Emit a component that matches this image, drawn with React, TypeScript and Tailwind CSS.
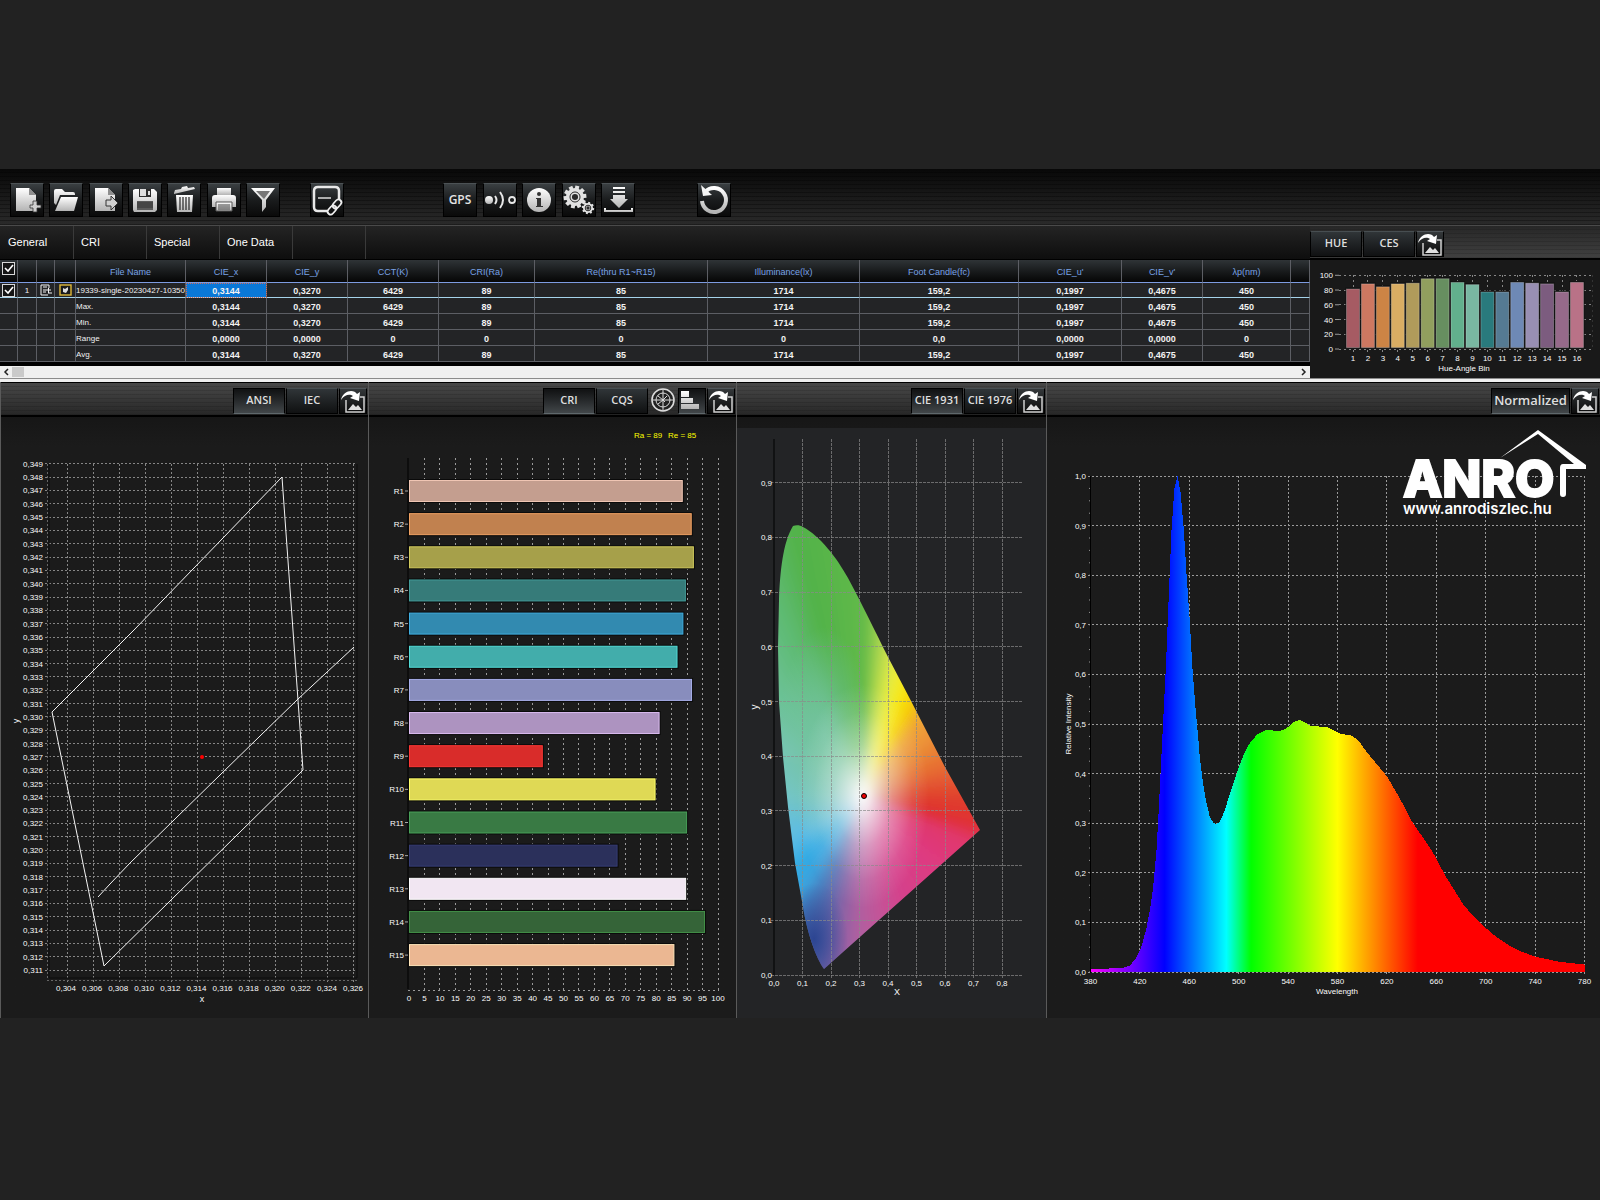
import type { ReactNode } from 'react'

const comma = (value: number, digits: number) => value.toFixed(digits).replace('.', ',')
const range = (count: number) => Array.from({ length: count }, (_, i) => i)

const columns = [
  { label: 'File Name', width: 110 },
  { label: 'CIE_x', width: 81 },
  { label: 'CIE_y', width: 81 },
  { label: 'CCT(K)', width: 91 },
  { label: 'CRI(Ra)', width: 96 },
  { label: 'Re(thru R1~R15)', width: 173 },
  { label: 'Illuminance(lx)', width: 152 },
  { label: 'Foot Candle(fc)', width: 159 },
  { label: "CIE_u'", width: 103 },
  { label: "CIE_v'", width: 81 },
  { label: 'λp(nm)', width: 88 },
]

const measured = ['0,3144', '0,3270', '6429', '89', '85', '1714', '159,2', '0,1997', '0,4675', '450']

const summaryRows = [
  { name: 'Max.', values: measured },
  { name: 'Min.', values: measured },
  { name: 'Range', values: ['0,0000', '0,0000', '0', '0', '0', '0', '0,0', '0,0000', '0,0000', '0'] },
  { name: 'Avg.', values: measured },
]

const hueBins = [
  { value: 82, color: '#a65b63' },
  { value: 89, color: '#cd7861' },
  { value: 85, color: '#cc8445' },
  { value: 89, color: '#d9ad63' },
  { value: 90, color: '#b09b5b' },
  { value: 96, color: '#919f5e' },
  { value: 96, color: '#678f60' },
  { value: 91, color: '#62b08d' },
  { value: 88, color: '#79b7a2' },
  { value: 78, color: '#297a7d' },
  { value: 78, color: '#557a93' },
  { value: 91, color: '#6e89b5' },
  { value: 90, color: '#988fb3' },
  { value: 89, color: '#7c5c7f' },
  { value: 78, color: '#966a8a' },
  { value: 91, color: '#b97287' },
]

const criBars = [
  { value: 88.6, color: '#c49e8f', edge: '#f0c6b4' },
  { value: 91.5, color: '#c1814f', edge: '#f0a263' },
  { value: 92.2, color: '#a6a04a', edge: '#d0c95d' },
  { value: 89.6, color: '#367b79', edge: '#449c99' },
  { value: 88.8, color: '#328ab0', edge: '#40aee0' },
  { value: 86.9, color: '#42adab', edge: '#53dbd7' },
  { value: 91.6, color: '#888dbd', edge: '#a9b0ec' },
  { value: 81.1, color: '#ad93c0', edge: '#ddbdf3' },
  { value: 43.3, color: '#d92c2a', edge: '#ff3735' },
  { value: 79.8, color: '#dfd955', edge: '#ffff6a' },
  { value: 90, color: '#397a44', edge: '#48a058' },
  { value: 67.5, color: '#2b305b', edge: '#363d75' },
  { value: 89.7, color: '#f1e6f2', edge: '#ffffff' },
  { value: 95.8, color: '#356438', edge: '#439048' },
  { value: 85.9, color: '#ebb792', edge: '#ffe6bb' },
]

// wavelength in nm, relative intensity
const spectrum: [number, number][] = [
  [380, 0.007], [395, 0.007], [407, 0.009], [412, 0.013], [416.4, 0.027], [420.7, 0.047], [425, 0.085],
  [428.4, 0.13], [430.7, 0.17], [433.6, 0.25], [435.6, 0.345], [437.9, 0.46], [439.3, 0.527], [441.3, 0.628],
  [443.6, 0.77], [445.6, 0.89], [447.9, 0.975], [450.5, 1], [453, 0.965], [455.6, 0.89], [457.9, 0.797],
  [460.2, 0.716], [462.5, 0.615], [464.8, 0.54], [467, 0.48], [468.5, 0.433], [470.8, 0.387], [473.7, 0.343],
  [476.6, 0.313], [479.4, 0.301], [482.3, 0.298], [485.2, 0.305], [488.9, 0.327], [492.9, 0.36], [496.6, 0.388],
  [500, 0.412], [503.8, 0.437], [509.5, 0.464], [515.2, 0.479], [523, 0.489], [529.6, 0.486], [535.9, 0.487],
  [541, 0.496], [545.3, 0.505], [549.6, 0.508], [553.9, 0.503], [558.2, 0.496], [571.1, 0.494], [576.9, 0.487],
  [582.6, 0.48], [591.2, 0.477], [596.9, 0.467], [604.1, 0.442], [619.8, 0.395], [629.9, 0.353], [639.9, 0.305],
  [657.1, 0.242], [667.1, 0.195], [681.4, 0.138], [690, 0.112], [700, 0.089], [709, 0.07], [718.7, 0.054],
  [729, 0.041], [740.2, 0.031], [758.8, 0.021], [780, 0.015],
]

// hue around the white point, degrees clockwise from the top
const gamutStops: [number, number, number, number][] = [
  [0, 98, 185, 72], [3, 128, 198, 76], [7, 176, 216, 78], [13, 229, 236, 68], [20, 248, 232, 24], [28, 246, 204, 0],
  [36, 240, 166, 56], [52, 235, 140, 55], [70, 231, 108, 50], [92, 224, 62, 46], [104, 224, 48, 48],
  [113, 224, 56, 108], [133, 223, 58, 128], [160, 212, 66, 140], [172, 196, 84, 152], [182, 176, 96, 160],
  [189, 144, 98, 164], [195, 112, 104, 170], [200, 88, 112, 178], [205, 74, 128, 192], [213, 60, 164, 222],
  [222, 48, 170, 228], [238, 93, 189, 229], [270, 116, 198, 200], [303, 118, 197, 176], [326, 104, 192, 140],
  [337, 93, 186, 112], [346, 82, 178, 72], [360, 98, 185, 72],
]

function gamutColor(angle: number) {
  const next = Math.max(1, gamutStops.findIndex((stop) => stop[0] >= angle))
  const a = gamutStops[next - 1]
  const b = gamutStops[next]
  const t = (angle - a[0]) / (b[0] - a[0])
  const mix = (i: number) => Math.round(a[i] + (b[i] - a[i]) * t)
  return `rgb(${mix(1)},${mix(2)},${mix(3)})`
}

function Defs() {
  return (
    <svg className="h-0 w-0 absolute" aria-hidden>
      <defs>
        <linearGradient id="metal" x1="0" y1="0" x2="0" y2="1">
          <stop offset="0" stopColor="#ffffff" />
          <stop offset="1" stopColor="#b4b4b4" />
        </linearGradient>
      </defs>
    </svg>
  )
}

function ToolButton({ label, children }: { label: string; children: ReactNode }) {
  return (
    <button
      type="button"
      aria-label={label}
      className="h-[34px] w-[34px] shrink-0 border border-black border-t-[#4c5255] bg-linear-to-b from-[#3a3f42] via-[#1a1c1d] to-[#0a0a0a] font-['Open_Sans',sans-serif] text-xs font-semibold text-[#e4e4e4]"
    >
      {children}
    </button>
  )
}

function ToolIcon({ children }: { children: ReactNode }) {
  return (
    <svg className="-m-px h-[34px] w-[34px]" viewBox="0 0 34 34" fill="url(#metal)">
      {children}
    </svg>
  )
}

function Gear({ cx, cy, r, teeth, tooth }: { cx: number; cy: number; r: number; teeth: number; tooth: number }) {
  return (
    <g transform={`translate(${cx} ${cy})`} fill="#e2e2e2">
      {range(teeth).map((i) => (
        <rect
          key={i}
          x={-tooth / 2}
          y={-r - tooth * 0.6}
          width={tooth}
          height={tooth * 1.2}
          transform={`rotate(${(360 / teeth) * i + 12})`}
        />
      ))}
      <circle r={r} />
      <circle r={r * 0.56} fill="none" stroke="#2a2a2a" strokeWidth="1" />
      <circle r={r * 0.34} fill="#2a2a2a" />
    </g>
  )
}

function Toolbar() {
  return (
    <div className="flex h-[57px] items-center border-b border-[#4a4a4a] bg-[repeating-linear-gradient(to_bottom,transparent_0_3px,#00000050_3px_4px),linear-gradient(to_bottom,#080808,#2a2a2a)] px-[10px] pt-[6px]">
      <div className="flex w-[270px] justify-between">
        <ToolButton label="New file">
          <ToolIcon>
            <path d="M6 5h13l7 7v10h-3v6H6z" />
            <path d="M19 5v7h7z" fill="#8f8f8f" />
            <path d="M23 18h4v4h4v3h-4v4h-4v-4h-3v-3h3z" fill="#d0d0d0" stroke="#333" strokeWidth="0.8" />
          </ToolIcon>
        </ToolButton>
        <ToolButton label="Open">
          <ToolIcon>
            <path d="M5 8q0-2 2-2h6l3 3h8q2 0 2 2v1H11L7 22 5 20z" />
            <path d="M12 14h17l-4 14H6z" />
          </ToolIcon>
        </ToolButton>
        <ToolButton label="Export">
          <ToolIcon>
            <path d="M6 5h13l7 7v16H6z" />
            <path d="M19 5v7h7z" fill="#8f8f8f" />
            <path d="M17 17h5v-4l7 7-7 7v-4h-5z" fill="#d0d0d0" stroke="#333" />
          </ToolIcon>
        </ToolButton>
        <ToolButton label="Save">
          <ToolIcon>
            <path d="M5 7l2-1h19l3 3v18l-2 2H6l-1-2z" />
            <path d="M11 6h12v8H11z" fill="#2b2b2b" />
            <path d="M12 6h6v7h-6zM20 8h2v4h-2z" fill="#dcdcdc" />
            <path d="M9 18h16v9H9z" fill="#5a5a5a" />
            <path d="M9 20h16M9 22h16M9 24h16" stroke="#333" />
          </ToolIcon>
        </ToolButton>
        <ToolButton label="Delete">
          <ToolIcon>
            <path d="M7 10l1-3 6-1 1-2 5-1 1 2 6-1 1 2-21 5z" />
            <path d="M9 12h17l-1 17H10z" />
            <path d="M13 14v13M16 14v13M19 14v13M22 14v13" stroke="#333" strokeWidth="1.3" />
          </ToolIcon>
        </ToolButton>
        <ToolButton label="Print">
          <ToolIcon>
            <path d="M10 5h14v7H10z" />
            <path d="M5 15q0-3 3-3h18q3 0 3 3v9h-4v-4H9v4H5z" />
            <path d="M9 19h16v9H9z" stroke="#555" />
            <path d="M11 22h12M11 24h12M11 26h12" stroke="#444" />
          </ToolIcon>
        </ToolButton>
        <ToolButton label="Filter">
          <ToolIcon>
            <path d="M5 5h24l-9 12v7l-4 5V17z" />
            <path d="M10 8h14l-6 8z" fill="#777" />
          </ToolIcon>
        </ToolButton>
      </div>
      <div className="ml-[30px] flex">
        <ToolButton label="Link screen">
          <ToolIcon>
            <path
              d="M17 28H8q-4 0-4-4V8q0-4 4-4h17q4 0 4 4v9"
              fill="none"
              stroke="#e8e8e8"
              strokeWidth="2.5"
            />
            <path d="M8 15h13" stroke="#ddd" strokeWidth="1.5" />
            <g fill="none" stroke="#eee" strokeWidth="1.8">
              <rect x="-5" y="-3" width="10" height="6" rx="3" transform="translate(27 21) rotate(-48)" />
              <rect x="-5" y="-3" width="10" height="6" rx="3" transform="translate(22 27) rotate(-48)" />
            </g>
          </ToolIcon>
        </ToolButton>
      </div>
      <div className="ml-[99px] flex w-[192px] justify-between">
        <ToolButton label="GPS">GPS</ToolButton>
        <ToolButton label="Beacon">
          <ToolIcon>
            <circle cx="6" cy="17" r="4" />
            <path d="M12 13q3 4 0 8M17 9q6 8 0 16" fill="none" stroke="#e8e8e8" strokeWidth="2" />
            <circle cx="29" cy="17" r="3" fill="none" stroke="#e8e8e8" strokeWidth="1.8" />
          </ToolIcon>
        </ToolButton>
        <ToolButton label="Info">
          <ToolIcon>
            <circle cx="17" cy="17" r="12" />
            <circle cx="17" cy="11" r="2" fill="#333" />
            <path d="M14 15h5v8h2v1h-7v-1h1v-7h-1z" fill="#333" />
          </ToolIcon>
        </ToolButton>
        <ToolButton label="Settings">
          <ToolIcon>
            <Gear cx={13} cy={14} r={9} teeth={10} tooth={4} />
            <Gear cx={26} cy={25} r={5} teeth={8} tooth={2} />
          </ToolIcon>
        </ToolButton>
        <ToolButton label="Download">
          <ToolIcon>
            <path d="M12 4h12v2H12zM12 8h12v2H12zM12 12h12v4h3l-9 9-9-9h3z" />
            <path d="M3 25h2v2h25v-2h2v4H3z" />
          </ToolIcon>
        </ToolButton>
      </div>
      <div className="ml-[62px] flex">
        <ToolButton label="Refresh">
          <ToolIcon>
            <path d="M8 9A12 12 0 1 1 5 18" fill="none" stroke="url(#metal)" strokeWidth="4" />
            <path d="M4 2l2 11 9-1z" fill="#f4f4f4" />
          </ToolIcon>
        </ToolButton>
      </div>
    </div>
  )
}

function PanelButton({ children, active, wide }: { children: ReactNode; active?: boolean; wide?: boolean }) {
  return (
    <button
      type="button"
      aria-pressed={!!active}
      className={`h-[26px] shrink-0 border border-black font-['Open_Sans',sans-serif] font-semibold whitespace-nowrap text-[#dedede] ${
        wide ? 'w-[79px] text-[13px]' : 'w-[52px] text-[11px]'
      } ${
        active
          ? 'border-b-[#5f686c] bg-linear-to-b from-[#101112] to-[#42474a]'
          : 'border-t-[#474e51] bg-linear-to-b from-[#303538] to-[#101112]'
      }`}
    >
      {children}
    </button>
  )
}

function ExportButton() {
  return (
    <button
      type="button"
      aria-label="Export image"
      className="h-[26px] w-7 shrink-0 border border-black border-t-[#50565a] bg-linear-to-b from-[#34383a] to-[#0c0c0c]"
    >
      <svg className="-m-px h-[26px] w-7" viewBox="0 0 28 26" fill="none">
        <path d="M7 12v12h18V9h-4" stroke="#cfcfcf" strokeWidth="1.5" />
        <path d="M9 22l5-6 3 3 2-2 4 5z" fill="#e0e0e0" />
        <path d="M2 12C4 2 15 1 18 6l3-2-1 9-9-3 3-2C11 6 6 6 2 12z" fill="#fff" />
      </svg>
    </button>
  )
}

function PanelHeader({ children }: { children: ReactNode }) {
  return (
    <div className="flex h-[35px] items-center justify-end gap-px border-t border-b-2 border-black bg-[repeating-linear-gradient(to_bottom,transparent_0_3px,#00000020_3px_4px),linear-gradient(to_bottom,#484848,#272727)] pt-[3px] pr-px">
      {children}
    </div>
  )
}

function Tick({ label }: { label: string }) {
  return (
    <label className="mx-auto grid h-[13px] w-[13px]">
      <input
        type="checkbox"
        defaultChecked
        aria-label={label}
        className="peer col-start-1 row-start-1 h-[13px] w-[13px] appearance-none border border-[#d8d8d8] bg-[#151515]"
      />
      <svg
        viewBox="0 0 13 13"
        className="pointer-events-none invisible col-start-1 row-start-1 h-[13px] w-[13px] peer-checked:visible"
      >
        <path d="M3 6l3 3 5-6" fill="none" stroke="#fff" strokeWidth="1.6" />
      </svg>
    </label>
  )
}

const cell = 'border-r border-b border-r-[#5c5e64] overflow-hidden whitespace-nowrap'

function DataTable() {
  return (
    <table className="w-full table-fixed border-separate border-spacing-0 bg-[#232426] text-[9px] leading-[12px] text-[#f2f2f2]">
      <colgroup>
        <col className="w-[18px]" />
        <col className="w-[19px]" />
        <col className="w-[18px]" />
        <col className="w-[21px]" />
        {columns.map((column) => (
          <col key={column.label} style={{ width: column.width }} />
        ))}
        <col />
      </colgroup>
      <thead>
        <tr className="h-[23px] bg-linear-to-b from-[#2f3437] to-[#050505] text-[#78a2e6]">
          <th className={`${cell} border-b-[#7d9be0] p-0 pt-[2px] align-top`}>
            <Tick label="Select all" />
          </th>
          <th className={`${cell} border-b-[#7d9be0] p-0`} />
          <th className={`${cell} border-b-[#7d9be0] p-0`} />
          <th className={`${cell} border-b-[#7d9be0] p-0`} />
          {columns.map((column) => (
            <th key={column.label} className={`${cell} border-b-[#7d9be0] p-0 pt-[2px] font-normal`}>
              {column.label}
            </th>
          ))}
          <th className={`${cell} border-b-[#7d9be0] p-0`} />
        </tr>
      </thead>
      <tbody className="text-center">
        <tr className="h-[15px]">
          <td className={`${cell} border-b-[#a5d3ea] p-0`}>
            <Tick label="Select row 1" />
          </td>
          <td className={`${cell} border-b-[#a5d3ea] p-0 pt-px text-[8px]`}>1</td>
          <td className={`${cell} border-b-[#a5d3ea] p-0`}>
            <svg viewBox="0 0 12 12" className="mx-auto h-3 w-3" fill="none" stroke="#f2f2f2">
              <path d="M9 4V1H1v10h7M3 3h4M3 6h3M3 8h3M6 6h5M8.500 4v5M8 9h4" />
            </svg>
          </td>
          <td className={`${cell} border-b-[#a5d3ea] p-0`}>
            <svg viewBox="0 0 13 12" className="mx-auto h-3 w-[13px]">
              <rect x="1" y="1" width="11" height="10" fill="#1a1a1a" stroke="#e0b93a" strokeWidth="1.4" />
              <path d="M4 4l2 1 3-2v3L7 9 4 8z" fill="#ddd" />
            </svg>
          </td>
          <td className={`${cell} border-b-[#a5d3ea] p-0 pt-[2px] text-left text-[8px]`}>
            19339-single-20230427-10350
          </td>
          {measured.map((value, i) => (
            <td
              key={i}
              className={`${cell} border-b-[#a5d3ea] p-0 pt-[2px] font-bold ${
                i === 0 ? 'bg-[#0a78d8] outline outline-dotted -outline-offset-1 outline-[#d06a5a]' : ''
              }`}
            >
              {value}
            </td>
          ))}
          <td className={`${cell} border-b-[#a5d3ea] p-0`} />
        </tr>
        {summaryRows.map((row) => (
          <tr key={row.name} className="h-4">
            {range(4).map((i) => (
              <td key={i} className={`${cell} border-b-[#5c5e64] p-0`} />
            ))}
            <td className={`${cell} border-b-[#5c5e64] p-0 pt-[3px] text-left text-[8px]`}>{row.name}</td>
            {row.values.map((value, i) => (
              <td key={i} className={`${cell} border-b-[#5c5e64] p-0 pt-[3px] font-bold`}>
                {value}
              </td>
            ))}
            <td className={`${cell} border-b-[#5c5e64] p-0`} />
          </tr>
        ))}
      </tbody>
    </table>
  )
}

function ScrollBar() {
  return (
    <div className="flex h-3 items-center bg-[#efefef]">
      <button type="button" aria-label="Scroll left" className="flex h-3 w-3 items-center justify-center">
        <svg viewBox="0 0 6 8" className="h-2 w-[6px]" fill="none" stroke="#222" strokeWidth="1.5">
          <path d="M5 1L2 4l3 3" />
        </svg>
      </button>
      <div className="h-[10px] w-3 bg-[#c9c9c9]" />
      <button type="button" aria-label="Scroll right" className="ml-auto flex h-3 w-3 items-center justify-center">
        <svg viewBox="0 0 6 8" className="h-2 w-[6px]" fill="none" stroke="#222" strokeWidth="1.5">
          <path d="M1 1l3 3-3 3" />
        </svg>
      </button>
    </div>
  )
}

function HueChart() {
  const y = (value: number) => 89 - value * 0.737
  const x = (bin: number) => 43 + bin * 14.93
  return (
    <svg viewBox="0 0 290 118" className="block w-full bg-[#191919] text-[8px]" fill="#fafafa">
      <g stroke="#858585" strokeDasharray="2 3" shapeRendering="crispEdges">
        {range(6).map((i) => (
          <line key={i} x1="29" x2="283" y1={y(i * 20)} y2={y(i * 20)} />
        ))}
        {range(16).map((i) => (
          <line key={i} x1={x(i)} x2={x(i)} y1="15" y2="92" />
        ))}
        <line x1="282" x2="282" y1="15" y2="89" stroke="#333" />
      </g>
      {range(6).map((i) => (
        <g key={i}>
          <line x1="25" x2="29" y1={y(i * 20)} y2={y(i * 20)} stroke="#999" />
          <text x="23" y={y(i * 20) + 3} textAnchor="end">
            {i * 20}
          </text>
        </g>
      ))}
      {hueBins.map((bin, i) => (
        <g key={i}>
          <rect x={x(i) - 7.5} y={y(bin.value) - 1} width="15" height={88 - y(bin.value) + 1} fill="#101010" />
          <rect
            x={x(i) - 6.5}
            y={y(bin.value) + 0.5}
            width="13"
            height={87 - y(bin.value)}
            fill={bin.color}
            stroke="#fff"
            strokeOpacity="0.25"
          />
          <text x={x(i)} y="101" textAnchor="middle">
            {i + 1}
          </text>
        </g>
      ))}
      <text x="154" y="111" textAnchor="middle">
        Hue-Angle Bin
      </text>
    </svg>
  )
}

function BinningChart() {
  const x = (value: number) => 67 + (value - 0.304) * 13045
  const y = (value: number) => 553 - (value - 0.311) * 13320
  return (
    <svg viewBox="1 0 367 601" className="block w-full text-[8px]" fill="#fafafa">
      <g stroke="#868686" strokeDasharray="2 2" shapeRendering="crispEdges">
        {range(39).map((i) => (
          <line key={i} x1="45" x2="357" y1={y(0.311 + i / 1000)} y2={y(0.311 + i / 1000)} />
        ))}
        {range(12).map((i) => (
          <line key={i} x1={x(0.304 + i / 500)} x2={x(0.304 + i / 500)} y1="47" y2="565" />
        ))}
        <line x1="47" x2="47" y1="47" y2="562" stroke="#666" />
        <line x1="47" x2="357" y1="563" y2="563" stroke="#666" />
      </g>
      <path d="M49 47v514h308M357 47v514" fill="none" stroke="#0c0c0c" strokeWidth="1" />
      {range(39).map((i) => (
        <text key={i} x="43" y={y(0.311 + i / 1000) + 3} textAnchor="end">
          {comma(0.311 + i / 1000, 3)}
        </text>
      ))}
      {range(12).map((i) => (
        <text key={i} x={x(0.304 + i / 500) - 1} y="574" textAnchor="middle">
          {comma(0.304 + i / 500, 3)}
        </text>
      ))}
      <text x="202" y="585" textAnchor="middle" className="text-[9px]">
        x
      </text>
      <text x="0" y="0" textAnchor="middle" transform="translate(19 304) rotate(-90)" className="text-[9px]">
        y
      </text>
      <g fill="none" stroke="#f4f4f4" strokeWidth="1">
        <path d="M282 60L303 353L104 549L52 295L74 273L134 213Z" />
        <path d="M98 480L110 467L130 446L220 358L298 282L354 230" />
      </g>
      <circle cx="202" cy="340" r="2" fill="#f00" />
    </svg>
  )
}

function CriChart() {
  const x = (value: number) => 40 + value * 3.09
  const y = (index: number) => 74 + index * 33.15
  return (
    <svg viewBox="0 0 367 601" className="block w-full text-[8px]" fill="#fafafa">
      <g fill="#ffff00">
        <text x="265" y="21">Ra = 89</text>
        <text x="299" y="21">Re = 85</text>
      </g>
      <path d="M39 41v531" stroke="#000" />
      <g stroke="#9a9a9a" strokeDasharray="2 3" shapeRendering="crispEdges">
        {range(20).map((i) => (
          <line key={i} x1={x(i * 5 + 5)} x2={x(i * 5 + 5)} y1="41" y2="575" />
        ))}
        <line x1="39" x2="350" y1="573" y2="573" />
      </g>
      {range(21).map((i) => (
        <text key={i} x={x(i * 5)} y="584" textAnchor="middle">
          {i * 5}
        </text>
      ))}
      {criBars.map((bar, i) => (
        <g key={i}>
          <rect x="39" y={y(i) - 12} width={bar.value * 3.09 + 2} height="24" fill="#0a0a0a" />
          <rect
            x="40.500"
            y={y(i) - 10.5}
            width={bar.value * 3.09 - 1}
            height="21"
            fill={bar.color}
            stroke={bar.edge}
          />
          <line x1="36" x2="39" y1={y(i)} y2={y(i)} stroke="#aaa" />
          <text x="35" y={y(i) + 3} textAnchor="end">
            R{i + 1}
          </text>
        </g>
      ))}
    </svg>
  )
}

function GamutChart() {
  const x = (value: number) => 38 + value * 285
  const y = (value: number) => 558 - value * 547
  const wedge = (angle: number) => {
    const point = (degrees: number) => {
      const a = (degrees * Math.PI) / 180
      return `${(127 + Math.sin(a) * 340).toFixed(1)},${(379 - Math.cos(a) * 340).toFixed(1)}`
    }
    return `127,379 ${point(angle)} ${point(angle + 2.5)}`
  }
  return (
    <svg viewBox="1 0 309 601" className="block w-full text-[8px]" fill="#fafafa">
      <defs>
        <clipPath id="locus">
          <path d="M57 109C60 108 64 108 67 110C84 119 101 141 112 161C125 185 139 214 152 240L174 282L209 350L244 413L88 552C80 541 71 515 67 490L59 446L52 390L47 340L43 285L42 230L43 183C44 155 47 125 57 109Z" />
        </clipPath>
        <radialGradient id="white-point">
          <stop offset="0" stopColor="#fff" stopOpacity="0.950" />
          <stop offset="0.120" stopColor="#fff" stopOpacity="0.850" />
          <stop offset="0.450" stopColor="#fff" stopOpacity="0.400" />
          <stop offset="0.750" stopColor="#fff" stopOpacity="0.120" />
          <stop offset="1" stopColor="#fff" stopOpacity="0" />
        </radialGradient>
        <radialGradient id="teal">
          <stop offset="0" stopColor="#76c4a4" stopOpacity="0.900" />
          <stop offset="1" stopColor="#76c4a4" stopOpacity="0" />
        </radialGradient>
        <radialGradient id="violet">
          <stop offset="0" stopColor="#2c4592" stopOpacity="1" />
          <stop offset="1" stopColor="#2c4592" stopOpacity="0" />
        </radialGradient>
        <filter id="soften" x="-5%" y="-5%" width="110%" height="110%">
          <feGaussianBlur stdDeviation="5" />
        </filter>
      </defs>
      <rect y="11" width="310" height="590" fill="#232426" />
      <g clipPath="url(#locus)">
        <g filter="url(#soften)">
          {range(180).map((i) => (
            <polygon key={i} points={wedge(i * 2)} fill={gamutColor(i * 2 + 1)} />
          ))}
        </g>
        <ellipse cx="88" cy="320" rx="46" ry="110" fill="url(#teal)" />
        <ellipse cx="78" cy="522" rx="34" ry="56" fill="url(#violet)" />
        <ellipse cx="127" cy="379" rx="66" ry="112" fill="url(#white-point)" />
      </g>
      <g stroke="#8a8a8a" strokeOpacity="0.700" strokeDasharray="3 1" shapeRendering="crispEdges">
        {range(10).map((i) => (
          <line key={i} x1="35" x2="286" y1={y(i / 10)} y2={y(i / 10)} />
        ))}
        {range(8).map((i) => (
          <line key={i} x1={x((i + 1) / 10)} x2={x((i + 1) / 10)} y1="22" y2="561" />
        ))}
      </g>
      <path d="M38 22v536" stroke="#000" strokeWidth="1" />
      {range(10).map((i) => (
        <text key={i} x="36" y={y(i / 10) + 3} textAnchor="end">
          {comma(i / 10, 1)}
        </text>
      ))}
      {range(9).map((i) => (
        <text key={i} x={x(i / 10)} y="569" textAnchor="middle">
          {comma(i / 10, 1)}
        </text>
      ))}
      <text x="161" y="578" textAnchor="middle" className="text-[9px]">
        X
      </text>
      <text x="0" y="0" textAnchor="middle" transform="translate(22 290) rotate(-90)" className="text-[10px]">
        y
      </text>
      <circle cx="128" cy="379" r="2.500" fill="#e00" stroke="#000" />
    </svg>
  )
}

function SpectrumChart() {
  const x = (nm: number) => 43.5 + (nm - 380) * 1.235
  const y = (value: number) => 555 - value * 496
  const outline = spectrum.map(([nm, value]) => `${x(nm).toFixed(1)},${y(value).toFixed(1)}`).join(' ')
  return (
    <svg viewBox="0 0 553 601" className="block w-full text-[8px]" fill="#fafafa">
      <defs>
        <linearGradient id="visible" gradientUnits="userSpaceOnUse" x1={x(380)} x2={x(780)} y1="0" y2="0">
          <stop offset="0" stopColor="#ff00ff" />
          <stop offset="0.150" stopColor="#0000ff" />
          <stop offset="0.275" stopColor="#00ffff" />
          <stop offset="0.325" stopColor="#00ff00" />
          <stop offset="0.500" stopColor="#ffff00" />
          <stop offset="0.6625" stopColor="#ff0000" />
          <stop offset="1" stopColor="#ff0000" />
        </linearGradient>
      </defs>
      <g stroke="#9a9a9a" strokeDasharray="2 2" shapeRendering="crispEdges">
        {range(11).map((i) => (
          <line key={i} x1="41" x2="538" y1={y(i / 10)} y2={y(i / 10)} />
        ))}
        {range(10).map((i) => (
          <line key={i} x1={x(420 + i * 40)} x2={x(420 + i * 40)} y1="59" y2="559" />
        ))}
      </g>
      <path d="M43.500 59v497" stroke="#000" />
      <g stroke="#999">
        {range(40).map((i) => (
          <line key={i} x1="42" x2="43" y1={y(i / 40)} y2={y(i / 40)} />
        ))}
      </g>
      <polygon points={`${x(380)},555 ${outline} ${x(780)},555`} fill="url(#visible)" shapeRendering="crispEdges" />
      {range(11).map((i) => (
        <text key={i} x="39" y={y(i / 10) + 3} textAnchor="end">
          {comma(i / 10, 1)}
        </text>
      ))}
      {range(11).map((i) => (
        <text key={i} x={x(380 + i * 40)} y="567" textAnchor="middle">
          {380 + i * 40}
        </text>
      ))}
      <text x="290" y="577" textAnchor="middle">
        Wavelength
      </text>
      <text x="0" y="0" textAnchor="middle" transform="translate(24 307) rotate(-90)">
        Relative Intensity
      </text>
      <g fill="#fff" className="font-[Inter,sans-serif]">
        <text x="356" y="80" stroke="#fff" strokeWidth="2" className="text-[51px] font-extrabold">
          ANRO
        </text>
        <text x="356" y="97" className="text-[15px] font-semibold">
          www.anrodiszlec.hu
        </text>
        <path d="M453 41L491 13L539 48V52H519V77Q519 80 516 80Q513 80 513 77V51Q513 47 516 47H527L491 17Z" />
      </g>
    </svg>
  )
}

function Panel({ header, children }: { header: ReactNode; children: ReactNode }) {
  return (
    <section className="border-l border-[#5a5a5a] bg-linear-to-b from-[#111] to-[#1b1b1b] to-10%">
      <PanelHeader>{header}</PanelHeader>
      {children}
    </section>
  )
}

export default function App() {
  return (
    <main className="min-h-screen bg-[#222222] pt-[169px] font-['Liberation_Sans',Arial,sans-serif]">
      <Defs />
      <Toolbar />
      <div className="grid grid-cols-[minmax(0,1310fr)_minmax(0,290fr)] bg-black">
        <div>
          <nav className="flex h-[34px] border-b border-black bg-linear-to-b from-[#242424] to-[#0e0e0e] pl-px text-[11px] text-white">
            {['General', 'CRI', 'Special', 'One Data', ''].map((tab) => (
              <button key={tab} type="button" className="w-[73px] border-r border-[#3a3a3a] pl-[7px] text-left">
                {tab}
              </button>
            ))}
          </nav>
          <DataTable />
          <div className="h-1 bg-black" />
          <ScrollBar />
        </div>
        <div>
          <div className="flex h-[34px] items-center gap-px border-b-2 border-black bg-[repeating-linear-gradient(to_bottom,transparent_0_3px,#00000020_3px_4px),linear-gradient(to_bottom,#272727,#404040)] pt-[3px]">
            <PanelButton>HUE</PanelButton>
            <PanelButton>CES</PanelButton>
            <ExportButton />
          </div>
          <HueChart />
        </div>
      </div>
      <div className="h-1 border-t border-[#8a8a8a] bg-[#f0f0f0]" />
      <div className="grid grid-cols-[minmax(0,368fr)_minmax(0,368fr)_minmax(0,310fr)_minmax(0,554fr)]">
        <Panel
          header={
            <>
              <PanelButton active>ANSI</PanelButton>
              <PanelButton>IEC</PanelButton>
              <ExportButton />
            </>
          }
        >
          <BinningChart />
        </Panel>
        <Panel
          header={
            <>
              <PanelButton active>CRI</PanelButton>
              <PanelButton>CQS</PanelButton>
              <button type="button" aria-label="Radar view" className="h-[26px] w-7">
                <svg viewBox="0 0 28 26" className="h-[26px] w-7" fill="none" stroke="#dcdcdc">
                  <circle cx="14" cy="12" r="11" strokeWidth="1.6" fill="#222" />
                  <circle cx="14" cy="12" r="7" />
                  <path d="M14 1v22M3 12h22M9 8l5 4 4-4M9 16l5-4 2 2" strokeWidth="1" />
                </svg>
              </button>
              <button
                type="button"
                aria-label="Bar view"
                className="h-[26px] w-7 border border-black border-b-[#5f686c] bg-linear-to-b from-[#101112] to-[#42474a]"
              >
                <svg viewBox="0 0 28 26" className="-m-px h-[26px] w-7" fill="url(#metal)">
                  <path d="M3 3h8v6H3zM3 10h12v5H3zM3 16h18v5H3z" />
                </svg>
              </button>
              <ExportButton />
            </>
          }
        >
          <CriChart />
        </Panel>
        <Panel
          header={
            <>
              <PanelButton active>CIE 1931</PanelButton>
              <PanelButton>CIE 1976</PanelButton>
              <ExportButton />
            </>
          }
        >
          <GamutChart />
        </Panel>
        <Panel
          header={
            <>
              <PanelButton active wide>
                Normalized
              </PanelButton>
              <ExportButton />
            </>
          }
        >
          <SpectrumChart />
        </Panel>
      </div>
    </main>
  )
}
